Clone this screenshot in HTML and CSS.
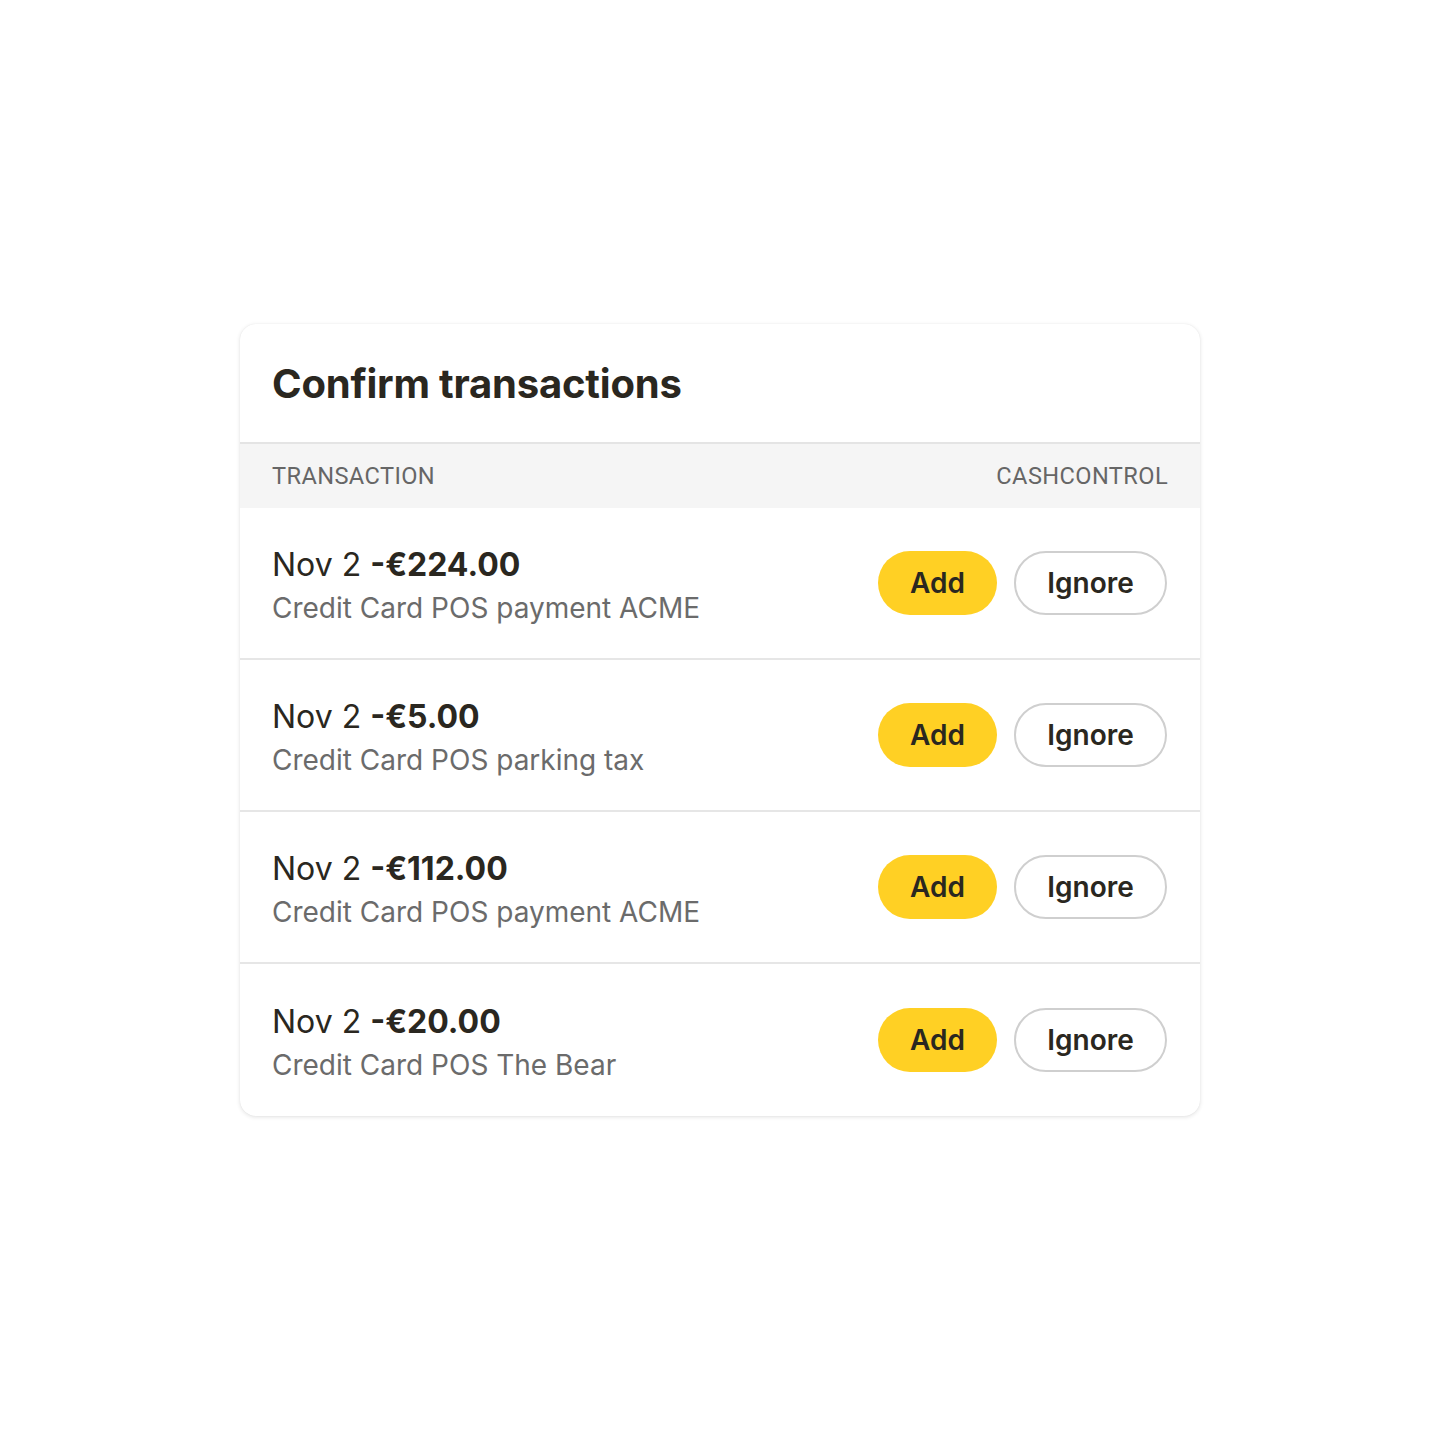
FILE: index.html
```html
<!DOCTYPE html>
<html lang="en">
<head>
<meta charset="utf-8">
<title>Confirm transactions</title>
<link rel="stylesheet" href="styles.css">
</head>
<body>
<main class="page">
  <section class="card">
    <h1 class="card-title">Confirm transactions</h1>
    <div class="table-head">
      <span>TRANSACTION</span>
      <span>CASHCONTROL</span>
    </div>
    <div class="row">
      <div class="info">
        <div class="line"><span class="date">Nov 2</span> <strong class="amount">-€224.00</strong></div>
        <div class="desc">Credit Card POS payment ACME</div>
      </div>
      <div class="actions">
        <button class="btn btn-add">Add</button>
        <button class="btn btn-ignore">Ignore</button>
      </div>
    </div>
    <div class="row">
      <div class="info">
        <div class="line"><span class="date">Nov 2</span> <strong class="amount">-€5.00</strong></div>
        <div class="desc">Credit Card POS parking tax</div>
      </div>
      <div class="actions">
        <button class="btn btn-add">Add</button>
        <button class="btn btn-ignore">Ignore</button>
      </div>
    </div>
    <div class="row">
      <div class="info">
        <div class="line"><span class="date">Nov 2</span> <strong class="amount">-€112.00</strong></div>
        <div class="desc">Credit Card POS payment ACME</div>
      </div>
      <div class="actions">
        <button class="btn btn-add">Add</button>
        <button class="btn btn-ignore">Ignore</button>
      </div>
    </div>
    <div class="row">
      <div class="info">
        <div class="line"><span class="date">Nov 2</span> <strong class="amount">-€20.00</strong></div>
        <div class="desc">Credit Card POS The Bear</div>
      </div>
      <div class="actions">
        <button class="btn btn-add">Add</button>
        <button class="btn btn-ignore">Ignore</button>
      </div>
    </div>
  </section>
</main>
</body>
</html>
```

FILE: styles.css
```css
* { box-sizing: border-box; }
html, body { margin: 0; padding: 0; background: #ffffff; }
body {
  font-family: Inter, "Noto Sans", sans-serif;
  color: #2a2720;
}
.page {
  width: 1440px;
  height: 1440px;
  display: flex;
  justify-content: center;
  padding-top: 324px;
}
.card {
  width: 960px;
  height: 792px;
  background: #fff;
  border-radius: 16px;
  box-shadow: 0 1px 4px rgba(0,0,0,0.12), 0 0 1px rgba(0,0,0,0.08);
  overflow: hidden;
  display: flex;
  flex-direction: column;
}
.card-title {
  margin: 0;
  height: 120px;
  flex: none;
  padding: 0 33px 0 32px;
  display: flex;
  align-items: center;
  font-size: 40px;
  font-weight: 700;
  letter-spacing: -0.2px;
  color: #2a2720;
  border-bottom: 2px solid #e4e4e4;
}
.table-head {
  height: 64px;
  flex: none;
  background: #f5f5f5;
  display: flex;
  align-items: center;
  justify-content: space-between;
  padding: 0 32px 0 32px;
  font-family: Roboto, Inter, sans-serif;
  font-size: 23.6px;
  color: #666;
  letter-spacing: 0.4px;
}
.row {
  height: 152px;
  flex: none;
  display: flex;
  align-items: center;
  justify-content: space-between;
  padding: 0 33px 0 32px;
  border-bottom: 2px solid #e6e6e6;
}
.row:last-child { border-bottom: none; }
.info {
  display: flex;
  flex-direction: column;
  gap: 6px;
  padding-top: 4px;
}
.line {
  font-size: 32px;
  line-height: 40px;
  color: #2a2720;
}
.amount { font-weight: 700; }
.desc {
  font-size: 28px;
  line-height: 34px;
  color: #6b6b6b;
}
.actions {
  display: flex;
  gap: 17px;
}
.btn {
  font-family: Inter, sans-serif;
  font-weight: 600;
  font-size: 28px;
  height: 64px;
  border-radius: 32px;
  color: #2a2720;
  cursor: pointer;
}
.btn-add {
  width: 119px;
  background: #ffd024;
  border: none;
}
.btn-ignore {
  width: 153px;
  background: #fff;
  border: 2px solid #cfcfcf;
}
```
